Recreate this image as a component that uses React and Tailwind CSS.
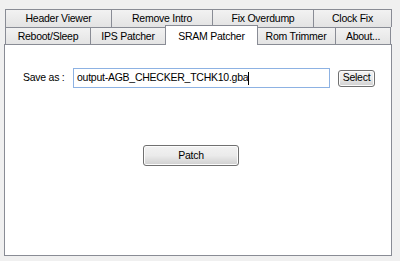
import React from 'react';

const font = { fontFamily: '"Liberation Sans", Arial, sans-serif' };

const row1 = [
  { label: 'Header Viewer', w: 'w-[107px]' },
  { label: 'Remove Intro', w: 'w-[102px]' },
  { label: 'Fix Overdump', w: 'w-[102px]' },
  { label: 'Clock Fix', w: 'w-[79px]' },
];

const row2 = [
  { label: 'Reboot/Sleep', w: 'w-[86px]' },
  { label: 'IPS Patcher', w: 'w-[76px]' },
  { label: 'SRAM Patcher', w: 'w-[93px]', active: true },
  { label: 'Rom Trimmer', w: 'w-[80px]' },
  { label: 'About...', w: 'w-[56px]' },
];

const Tab = ({ label, w, active, first }) => {
  if (active) {
    return (
      <div
        className={`${w} h-[20px] -mt-[2px] -mx-[1px] relative z-10 bg-white border border-b-0 border-[#898c95] flex items-start justify-center pt-[3px] text-black`}
      >
        {label}
      </div>
    );
  }
  return (
    <div
      className={`${w} h-[18px] ${first ? '' : '-ml-px'} bg-gradient-to-b from-[#f2f2f2] to-[#e3e3e3] border border-b-0 border-[#898c95] flex items-center justify-center text-black`}
    >
      {label}
    </div>
  );
};

const WinButton = ({ children, className }) => (
  <div
    className={`${className} rounded-[3px] border border-[#707070] bg-gradient-to-b from-[#f2f2f2] via-[#ebebeb] to-[#cfcfcf] flex items-center justify-center text-black shadow-[inset_0_0_0_1px_#fcfcfc]`}
  >
    {children}
  </div>
);

export default function App() {
  return (
    <div
      className="w-[400px] h-[261px] bg-[#f0f0f0] flex flex-col pt-[9px] pl-[4px] pr-[8px] pb-[5px] overflow-hidden text-[10.5px] tracking-[-0.25px]"
      style={font}
    >
      <div className="flex pl-[1px]">
        {row1.map((t, i) => (
          <Tab key={t.label} {...t} first={i === 0} />
        ))}
      </div>
      <div className="flex pl-[1px]">
        {row2.map((t, i) => (
          <Tab key={t.label} {...t} first={i === 0} />
        ))}
      </div>
      <div className="flex-1 -mt-px bg-white border border-[#898c95] flex flex-col">
        <div className="flex items-center mt-[23px]">
          <span className="ml-[18px] w-[50px] text-black">Save as :</span>
          <div className="w-[257px] h-[20px] border border-[#8db2e3] bg-white flex items-center pl-[3px] text-black">
            <span>output-AGB_CHECKER_TCHK10.gba</span>
            <span className="w-px h-[13px] bg-black" />
          </div>
          <WinButton className="ml-[8px] w-[37px] h-[17px]">Select</WinButton>
        </div>
        <WinButton className="ml-[138px] mt-[57px] w-[96px] h-[21px]">Patch</WinButton>
      </div>
    </div>
  );
}
